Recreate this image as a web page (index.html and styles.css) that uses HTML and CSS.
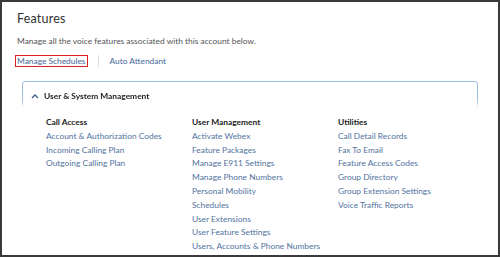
FILE: index.html
```html
<!DOCTYPE html>
<html lang="en">

<head>
    <meta charset="UTF-8">
    <meta name="viewport" content="width=device-width, initial-scale=1.0">
    <title>Features</title>
    <link rel="stylesheet" href="styles.css">
</head>

<body>
    <div class="frame">
        <h1 class="page-title">Features</h1>
        <p class="page-desc">Manage all the voice features associated with this account below.</p>

        <div class="tabs">
            <a class="tab tab-active">Manage Schedules</a>
            <span class="tab-sep"></span>
            <a class="tab">Auto Attendant</a>
        </div>

        <div class="panel">
            <div class="panel-head">
                <svg class="chevron" width="8" height="6" viewBox="0 0 8 6">
                    <path d="M1 5 L4 2 L7 5" fill="none" stroke="#3b5f8a" stroke-width="1.3" />
                </svg>
                <span>User &amp; System Management</span>
            </div>

            <div class="columns">
                <div class="col">
                    <div class="col-title">Call Access</div>
                    <a>Account &amp; Authorization Codes</a>
                    <a>Incoming Calling Plan</a>
                    <a>Outgoing Calling Plan</a>
                </div>
                <div class="col">
                    <div class="col-title">User Management</div>
                    <a>Activate Webex</a>
                    <a>Feature Packages</a>
                    <a>Manage E911 Settings</a>
                    <a>Manage Phone Numbers</a>
                    <a>Personal Mobility</a>
                    <a>Schedules</a>
                    <a>User Extensions</a>
                    <a>User Feature Settings</a>
                    <a>Users, Accounts &amp; Phone Numbers</a>
                </div>
                <div class="col">
                    <div class="col-title">Utilities</div>
                    <a>Call Detail Records</a>
                    <a>Fax To Email</a>
                    <a>Feature Access Codes</a>
                    <a>Group Directory</a>
                    <a>Group Extension Settings</a>
                    <a>Voice Traffic Reports</a>
                </div>
            </div>
        </div>
    </div>
</body>

</html>
```

FILE: styles.css
```css
html, body {
    margin: 0;
    padding: 0;
}

body {
    font-family: Lato, "Open Sans", Arial, sans-serif;
    background: white;
}

.frame {
    width: 500px;
    height: 257px;
    box-sizing: border-box;
    border: 2px solid #3a3a3a;
    padding: 7px 0 0 15px;
    overflow: hidden;
}

.page-title {
    font-size: 12.5px;
    font-weight: normal;
    color: #333;
    margin: 0;
    line-height: 20px;
    letter-spacing: 0.2px;
}

.page-desc {
    font-size: 8.4px;
    color: #555;
    margin: 6px 0 0 0;
    line-height: 12px;
}

.tabs {
    display: flex;
    align-items: center;
    margin-top: 7px;
    height: 13px;
}

.tab {
    font-size: 8.4px;
    color: #46699a;
    line-height: 10px;
}

.tab-active {
    border: 1px solid #e02020;
    padding: 0 1px;
    margin-left: -2px;
}

.tab-sep {
    width: 1px;
    height: 12px;
    background: #ddd;
    margin: 0 11px 0 10px;
}

.panel {
    margin-top: 14px;
    margin-left: 5px;
    width: 456px;
}

.panel-head {
    display: flex;
    align-items: center;
    gap: 5px;
    height: 24px;
    padding: 2px 0 0 8px;
    border: 1.5px solid #9cc0e2;
    border-bottom: none;
    border-radius: 3px 3px 0 0;
    font-size: 8.4px;
    font-weight: bold;
    color: #222;
    -webkit-mask-image: linear-gradient(to bottom, black 70%, transparent 100%);
}

.columns {
    display: grid;
    grid-template-columns: 146px 146px 146px;
    padding: 8px 0 0 24px;
}

.col {
    display: flex;
    flex-direction: column;
}

.col-title {
    font-size: 8.4px;
    font-weight: bold;
    color: #222;
    line-height: 13.8px;
}

.col a {
    font-size: 8.4px;
    color: #5273a0;
    line-height: 13.8px;
}
```
